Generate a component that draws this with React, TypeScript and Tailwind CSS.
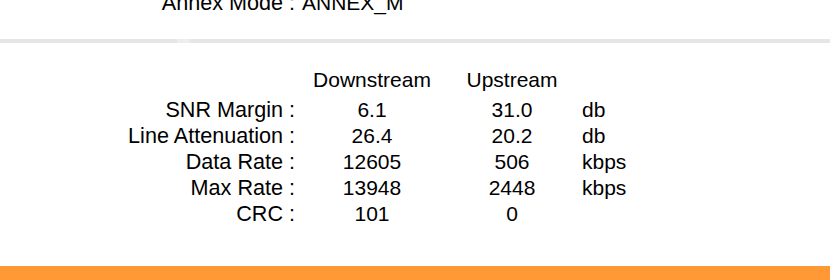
const rows = [
  { label: "SNR Margin :", down: "6.1", up: "31.0", unit: "db" },
  { label: "Line Attenuation :", down: "26.4", up: "20.2", unit: "db" },
  { label: "Data Rate :", down: "12605", up: "506", unit: "kbps" },
  { label: "Max Rate :", down: "13948", up: "2448", unit: "kbps" },
  { label: "CRC :", down: "101", up: "0", unit: "" },
];

function LineStatus() {
  return (
    <div className="flex h-[280px] flex-col overflow-hidden bg-white font-['Liberation_Sans',Arial,sans-serif] text-[21px] leading-[26px] text-black">
      <div className="-mt-[10px] grid grid-cols-[302px_auto]">
        <div className="pr-[7px] text-right text-[21.6px]">Annex Mode :</div>
        <div>ANNEX_M</div>
      </div>

      <div className="mt-[23px] flex h-[4px]">
        <div className="w-[177px] bg-[#e6e6e6]" />
        <div className="w-[13px] bg-[#ededed]" />
        <div className="flex-1 bg-[#e6e6e6]" />
      </div>

      <div className="mt-[24px] grid grid-cols-[302px_140px_140px_auto]">
        <div />
        <div className="text-center">Downstream</div>
        <div className="text-center">Upstream</div>
        <div />
      </div>

      <div className="mt-[4px] grid grid-cols-[302px_140px_140px_auto]">
        {rows.map((r) => (
          <div key={r.label} className="contents">
            <div className="pr-[7px] text-right text-[21.6px]">{r.label}</div>
            <div className="text-center">{r.down}</div>
            <div className="text-center">{r.up}</div>
            <div>{r.unit}</div>
          </div>
        ))}
      </div>

      <div className="mt-auto h-[14px] bg-[#fe9935]" />
    </div>
  );
}

export default LineStatus;
